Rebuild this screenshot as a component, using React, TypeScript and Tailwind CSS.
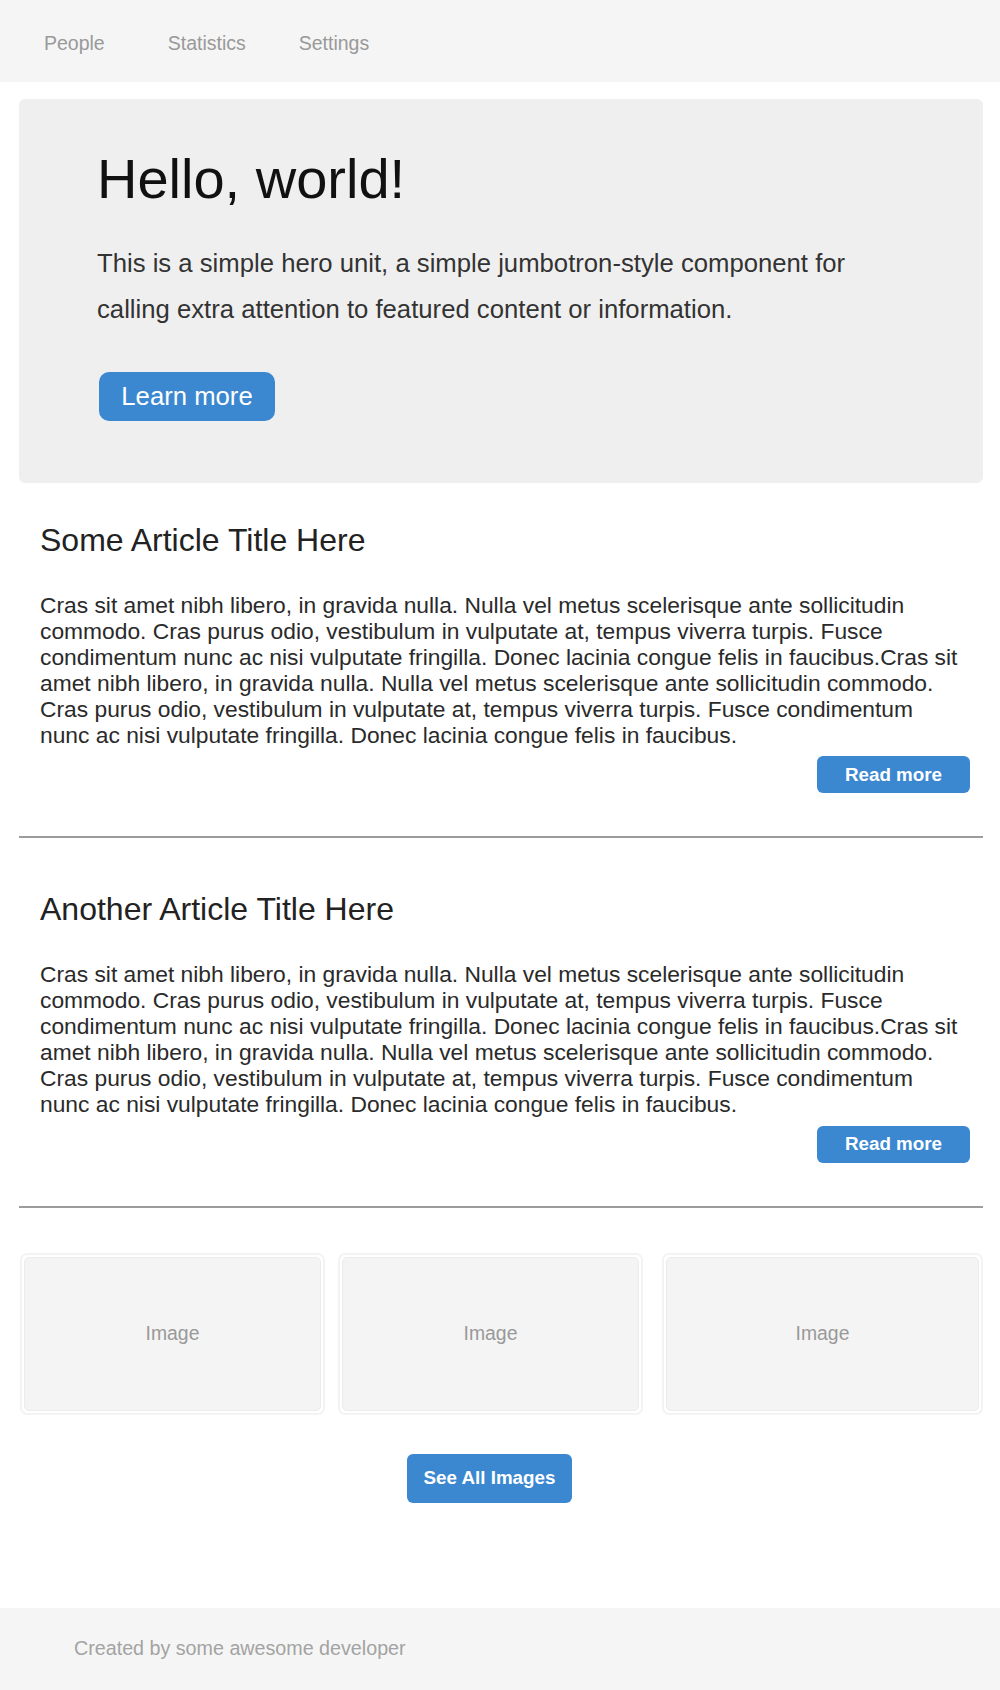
import React from "react";

const body =
  "Cras sit amet nibh libero, in gravida nulla. Nulla vel metus scelerisque ante sollicitudin commodo. Cras purus odio, vestibulum in vulputate at, tempus viverra turpis. Fusce condimentum nunc ac nisi vulputate fringilla. Donec lacinia congue felis in faucibus.Cras sit amet nibh libero, in gravida nulla. Nulla vel metus scelerisque ante sollicitudin commodo. Cras purus odio, vestibulum in vulputate at, tempus viverra turpis. Fusce condimentum nunc ac nisi vulputate fringilla. Donec lacinia congue felis in faucibus.";

function Article({ title, first }: { title: string; first?: boolean }) {
  return (
    <article className={first ? "mt-[37px]" : "mt-[51px]"}>
      <div className="pl-[21px] pr-[13px]">
        <h2 className="text-[32px] leading-[40px] text-[#222]">{title}</h2>
        <p className="mt-[33px] w-[922px] text-[22.8px] leading-[25.9px] text-[#2a2a2a]">{body}</p>
        <div className="mt-[8px] flex justify-end">
          <button className="h-[37px] w-[153px] rounded-[6px] bg-[#3b88d1] text-[18.8px] font-bold text-white">
            Read more
          </button>
        </div>
      </div>
      <hr className="mt-[43px] border-0 border-t-2 border-[#9c9c9c]" />
    </article>
  );
}

function ImageCard({ width }: { width: string }) {
  return (
    <div className={`${width} h-[162px] rounded-[7px] border-2 border-[#f3f3f3] bg-white p-[2px]`}>
      <div className="flex h-full items-center justify-center rounded-[5px] border border-[#ececec] bg-[#f4f4f4] text-[19.4px] text-[#999]">
        Image
      </div>
    </div>
  );
}

export default function App() {
  return (
    <div className="min-h-[1690px] bg-white font-['Liberation_Sans',Arial,sans-serif]">
      <nav className="flex h-[82px] items-center bg-[#f5f5f5] pl-[44px] pt-[5px] text-[19.5px] text-[#999]">
        <a href="#">People</a>
        <a href="#" className="ml-[63px]">Statistics</a>
        <a href="#" className="ml-[53px]">Settings</a>
      </nav>

      <main className="ml-[19px] w-[964px]">
        <section className="mt-[17px] h-[384px] rounded-[6px] bg-[#efefef] pl-[78px] pt-[48px]">
          <h1 className="text-[56px] leading-[64px] text-[#111]">Hello, world!</h1>
          <p className="mt-[29px] max-w-[790px] text-[25.7px] leading-[46px] text-[#333]">
            This is a simple hero unit, a simple jumbotron-style component for calling extra attention to featured content or information.
          </p>
          <button className="ml-[2px] mt-[40px] h-[49px] w-[176px] rounded-[10px] bg-[#3b88d1] text-[25.7px] text-white">
            Learn more
          </button>
        </section>

        <Article title="Some Article Title Here" first />
        <Article title="Another Article Title Here" />

        <div className="mt-[45px] flex pl-px">
          <ImageCard width="w-[306px]" />
          <div className="ml-[13px]">
            <ImageCard width="w-[305px]" />
          </div>
          <div className="ml-[19px]">
            <ImageCard width="w-[321px]" />
          </div>
        </div>

        <div className="mt-[39px] pl-[388px]">
          <button className="h-[49px] w-[165px] rounded-[6px] bg-[#3b88d1] text-[18.8px] font-bold text-white">
            See All Images
          </button>
        </div>
      </main>

      <footer className="mt-[105px] flex h-[82px] items-center bg-[#f5f5f5] pl-[74px] text-[19.7px] text-[#a3a3a3]">
        Created by some awesome developer
      </footer>
    </div>
  );
}
